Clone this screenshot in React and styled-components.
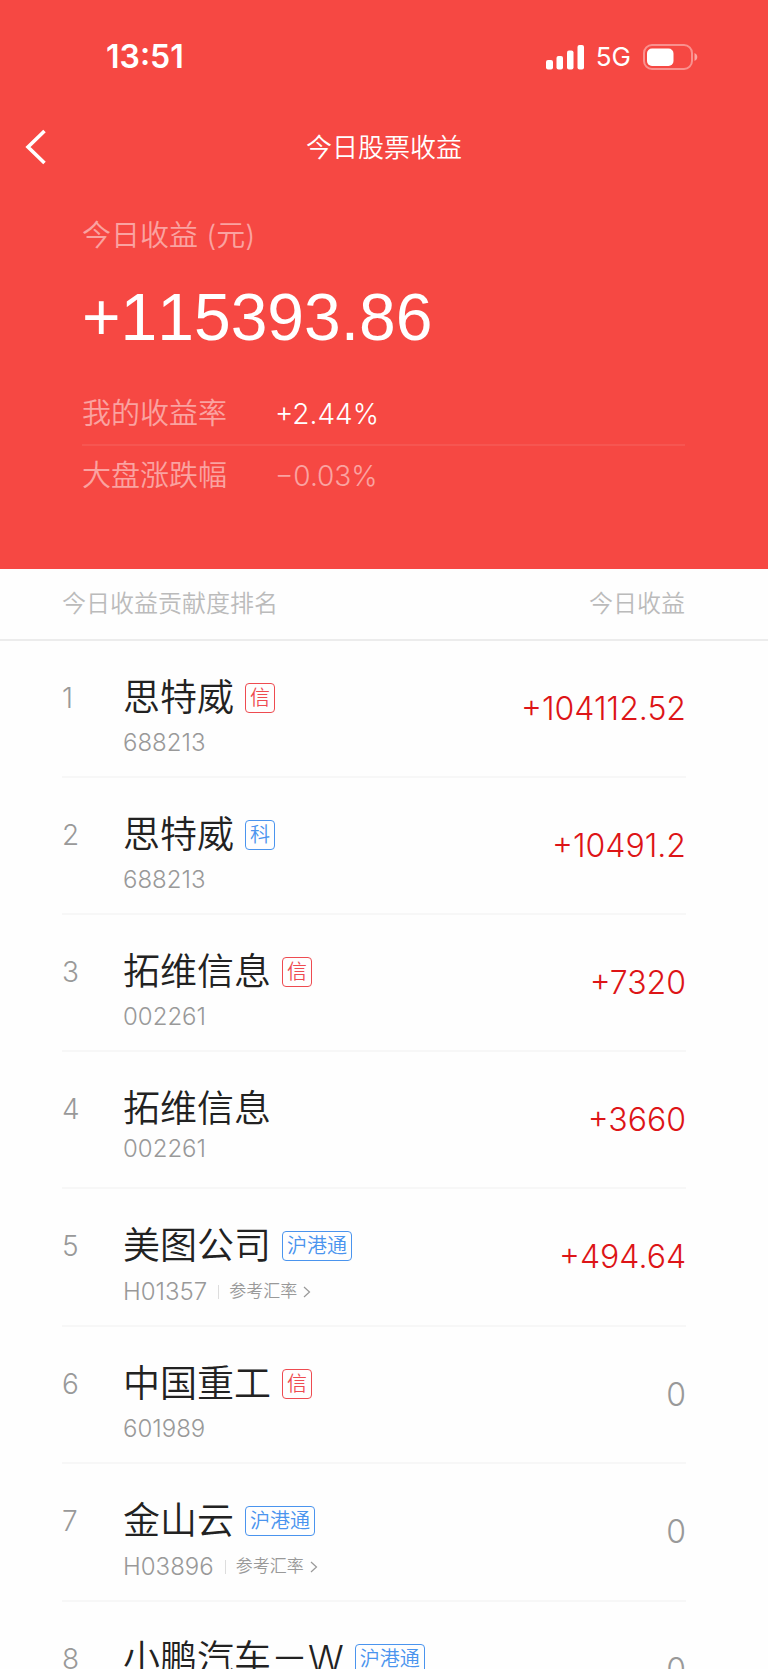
import React from "react";
import styled, { createGlobalStyle } from "styled-components";

const GlobalStyle = createGlobalStyle`
  *, *::before, *::after { box-sizing: border-box; }
  html, body { margin: 0; padding: 0; background: #fefefe; }
  body {
    font-family: Inter, "Noto Sans CJK SC", sans-serif;
    font-weight: 350;
    color: #222;
  }
`;

const Page = styled.main`
  display: flex;
  flex-direction: column;
  height: 100vh;
  overflow: hidden;
  background: #fefefe;
`;

const Header = styled.header`
  flex: none;
  display: flex;
  flex-direction: column;
  background: #f64843;
  color: #fff;
`;

const StatusBar = styled.div`
  display: flex;
  align-items: center;
  justify-content: space-between;
  height: 114px;
  padding: 0 70px 0 106px;
`;

const Clock = styled.time`
  font-size: 32px;
  line-height: 40px;
  font-weight: 600;
`;

const StatusIcons = styled.div`
  display: flex;
  align-items: center;
  gap: 12px;
`;

const Network = styled.span`
  font-size: 26px;
  line-height: 32px;
  font-weight: 400;
`;

const NavBar = styled.nav`
  display: grid;
  grid-template-columns: 72px 1fr 72px;
  align-items: center;
  height: 68px;
`;

const BackButton = styled.button`
  display: flex;
  align-items: center;
  height: 68px;
  padding: 0 0 2px 24px;
  border: 0;
  background: none;
  color: inherit;
  cursor: pointer;
`;

const Title = styled.h1`
  margin: 0;
  text-align: center;
  font-size: 26px;
  line-height: 40px;
  font-weight: 350;
`;

const Summary = styled.section`
  padding: 33px 83px 64px 82px;
`;

const SummaryLabel = styled.div`
  font-size: 29px;
  line-height: 42px;
  color: rgba(255, 255, 255, 0.5);
`;

const Total = styled.div`
  margin: 22px 0 28px;
  font-family: "Liberation Sans", Arial, sans-serif;
  font-size: 66px;
  line-height: 76px;
  font-weight: 400;
  font-kerning: none;
`;

const Rates = styled.dl`
  margin: 0;
`;

const Rate = styled.div`
  display: grid;
  grid-template-columns: 193px 1fr;
  align-items: center;
  height: 61px;
  font-size: 28px;
  line-height: 42px;
  color: ${(p) => (p.$strong ? "#fff" : "rgba(255, 255, 255, 0.5)")};

  & + & {
    border-top: 2px solid rgba(255, 255, 255, 0.08);
  }
  dt {
    font-size: 29px;
    color: rgba(255, 255, 255, 0.5);
  }
  dd {
    margin: 0;
  }
`;

const Ranking = styled.table`
  display: flex;
  flex-direction: column;
  flex: 1;
  min-height: 0;
  background: #fefefe;
`;

const RankingHead = styled.thead`
  display: block;
  border-bottom: 2px solid #ececec;
`;

const HeadRow = styled.tr`
  display: flex;
  align-items: center;
  justify-content: space-between;
  height: 70px;
  padding: 0 83px 0 62px;
`;

const HeadCell = styled.th`
  padding: 0;
  font-size: 24px;
  line-height: 36px;
  font-weight: 350;
  color: #bbb;
`;

const RankingBody = styled.tbody`
  display: block;
  flex: 1;
  min-height: 0;
  overflow-y: auto;
  scrollbar-width: none;
`;

const Row = styled.tr`
  display: grid;
  grid-template-columns: 61px 1fr auto;
  align-items: start;
  min-height: 137px;
  margin: 0 82px 0 62px;
  padding: 36px 0 15px;
  border-bottom: 2px solid #f7f7f7;
`;

const Rank = styled.td`
  padding: 0;
  font-size: 28px;
  line-height: 42px;
  color: #999;
`;

const Stock = styled.td`
  padding: 0;
`;

const NameLine = styled.div`
  display: flex;
  align-items: center;
  gap: 11px;
  height: 42px;
  margin-bottom: ${(p) => (p.$tagged ? 6 : 1)}px;
`;

const Name = styled.span`
  font-size: 37px;
  line-height: 42px;
`;

const tones = { red: "#ee4b50", blue: "#4a94ee" };

const Tag = styled.span`
  display: flex;
  align-items: center;
  height: 30px;
  padding: 0 4px;
  border: 1px solid ${(p) => tones[p.$tone]};
  border-radius: 4px;
  color: ${(p) => tones[p.$tone]};
  font-size: 20px;
  line-height: 28px;
`;

const Meta = styled.div`
  display: flex;
  align-items: center;
  gap: 11px;
  min-height: 36px;
  color: #999;
  font-size: 24px;
  line-height: 36px;
`;

const RateLink = styled.a`
  display: flex;
  align-items: center;
  gap: 6px;
  padding-left: 11px;
  color: inherit;
  font-size: 17px;
  line-height: 37px;
  text-decoration: none;
  background: linear-gradient(#ddd, #ddd) left center / 1px 14px no-repeat;
`;

const Amount = styled.td`
  padding: 11px 0 0;
  font-size: 32px;
  line-height: 42px;
  color: ${(p) => (p.$gain ? "#dd1417" : "#999")};
`;

const SignalIcon = () => (
  <svg width="38" height="26" viewBox="0 0 38 26" fill="currentColor" aria-hidden="true">
    <rect x="0" y="16" width="7" height="9.500" rx="2" />
    <rect x="10.500" y="12" width="6.500" height="13.500" rx="2" />
    <rect x="21" y="6.500" width="6.500" height="19" rx="2" />
    <rect x="31.500" y="1" width="6.500" height="24.500" rx="2" />
  </svg>
);

const BatteryIcon = () => (
  <svg width="55" height="26" viewBox="0 0 55 26" fill="none" aria-hidden="true">
    <rect x="1" y="1" width="48" height="24" rx="8" stroke="#fff" strokeOpacity=".4" strokeWidth="2" />
    <rect x="4" y="4.500" width="26.500" height="17.500" rx="5" fill="#fff" />
    <path d="M51.500 9c1.700.7 2.800 2.200 2.800 4s-1.100 3.300-2.800 4z" fill="#fff" fillOpacity=".5" />
  </svg>
);

const BackIcon = () => (
  <svg width="22" height="36" viewBox="0 0 22 36" fill="none" stroke="currentColor" strokeWidth="3.600" aria-hidden="true">
    <path d="M20.500 2 4 18 20.500 34" />
  </svg>
);

const ChevronIcon = () => (
  <svg width="8" height="12" viewBox="0 0 8 12" fill="none" stroke="currentColor" strokeWidth="1.200" aria-hidden="true">
    <path d="M1 1l5.500 5L1 11" />
  </svg>
);

const credit = { tone: "red", text: "信" };
const star = { tone: "blue", text: "科" };
const connect = { tone: "blue", text: "沪港通" };

const stocks = [
  { name: "思特威", code: "688213", amount: "+104112.52", tag: credit },
  { name: "思特威", code: "688213", amount: "+10491.2", tag: star },
  { name: "拓维信息", code: "002261", amount: "+7320", tag: credit },
  { name: "拓维信息", code: "002261", amount: "+3660" },
  { name: "美图公司", code: "H01357", amount: "+494.64", tag: connect, foreign: true },
  { name: "中国重工", code: "601989", amount: "0", tag: credit },
  { name: "金山云", code: "H03896", amount: "0", tag: connect, foreign: true },
  { name: "小鹏汽车－W", amount: "0", tag: connect },
];

export default function App() {
  return (
    <>
      <GlobalStyle />
      <Page>
        <Header>
          <StatusBar>
            <Clock>13:51</Clock>
            <StatusIcons>
              <SignalIcon />
              <Network>5G</Network>
              <BatteryIcon />
            </StatusIcons>
          </StatusBar>
          <NavBar>
            <BackButton type="button" aria-label="返回">
              <BackIcon />
            </BackButton>
            <Title>今日股票收益</Title>
          </NavBar>
          <Summary>
            <SummaryLabel>今日收益 (元)</SummaryLabel>
            <Total>+115393.86</Total>
            <Rates>
              <Rate $strong>
                <dt>我的收益率</dt>
                <dd>+2.44%</dd>
              </Rate>
              <Rate>
                <dt>大盘涨跌幅</dt>
                <dd>−0.03%</dd>
              </Rate>
            </Rates>
          </Summary>
        </Header>
        <Ranking>
          <RankingHead>
            <HeadRow>
              <HeadCell colSpan={2}>今日收益贡献度排名</HeadCell>
              <HeadCell>今日收益</HeadCell>
            </HeadRow>
          </RankingHead>
          <RankingBody>
            {stocks.map((s, i) => (
              <Row key={i}>
                <Rank>{i + 1}</Rank>
                <Stock>
                  <NameLine $tagged={Boolean(s.tag)}>
                    <Name>{s.name}</Name>
                    {s.tag && <Tag $tone={s.tag.tone}>{s.tag.text}</Tag>}
                  </NameLine>
                  {s.code && (
                    <Meta>
                      <span>{s.code}</span>
                      {s.foreign && (
                        <RateLink href="#rates">
                          参考汇率
                          <ChevronIcon />
                        </RateLink>
                      )}
                    </Meta>
                  )}
                </Stock>
                <Amount $gain={s.amount !== "0"}>{s.amount}</Amount>
              </Row>
            ))}
          </RankingBody>
        </Ranking>
      </Page>
    </>
  );
}
